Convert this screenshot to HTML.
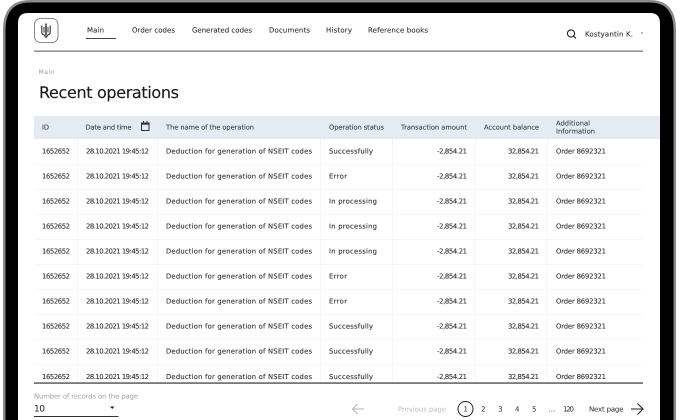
<!DOCTYPE html>
<html><head><meta charset="utf-8"><style>
html,body{margin:0;padding:0;background:#fff}
svg{display:block;font-family:"DejaVu Sans","Liberation Sans",sans-serif;text-rendering:geometricPrecision}
.r text{font-size:6.800px;fill:#2c2c2c;stroke:#2c2c2c;stroke-width:.1px}
.h text{font-size:6.700px;fill:#363c42;stroke:#363c42;stroke-width:.08px}
.n text{font-size:7px;fill:#2c2c2c;stroke:#2c2c2c;stroke-width:.08px}
</style></head><body>
<svg width="684" height="420" viewBox="0 0 684 420" xmlns="http://www.w3.org/2000/svg">
<rect width="684" height="420" fill="#fff"/>
<path d="M3 420V30Q3 0 30 0H650Q676 0 676 30V420Z" fill="#8a8a8a"/>
<path d="M5.500 420V30Q5.500 2.500 30 2.500H650Q673.500 2.500 673.500 30V420Z" fill="#000"/>
<path d="M18 420V23Q18 13 28 13H650Q660 13 660 23V420Z" fill="#fff"/>
<rect x="34.500" y="18.500" width="23.500" height="24" rx="6" fill="none" stroke="#666" stroke-width=".8"/>
<g fill="none" stroke="#222">
<path d="M46 23.500V35.500" stroke-width="1.400"/>
<path d="M41.800 25.500V32.500Q41.800 34.500 44 34.800L46 37.500L48 34.800Q50.200 34.500 50.200 32.500V25.500" stroke-width="1"/>
<path d="M44 27V32.500M48 27V32.500" stroke-width=".9"/>
</g>
<g class="n">
<text x="87" y="32.500" textLength="17">Main</text>
<text x="132" y="32.500" textLength="43">Order codes</text>
<text x="192" y="32.500" textLength="60">Generated codes</text>
<text x="269" y="32.500" textLength="41">Documents</text>
<text x="326" y="32.500" textLength="26">History</text>
<text x="368" y="32.500" textLength="60">Reference books</text>
<text x="585" y="36.500" textLength="48">Kostyantin K.</text>
</g>
<rect x="86" y="38" width="30" height="1" fill="#444"/>
<circle cx="571" cy="33.500" r="3.600" fill="none" stroke="#222" stroke-width="1.100"/>
<path d="M573.700 36.200l2.300 2.300" stroke="#222" stroke-width="1.100"/>
<path d="M641 32.500h2l-1 1.500z" fill="#444"/>
<rect x="34" y="50.500" width="609" height="1.300" fill="#7b7b7b"/>
<text x="38.500" y="74" font-size="6.200" fill="#a0a0a0" textLength="16">Main</text>
<text x="39" y="98" font-size="16" fill="#1c1c1c" stroke="#1c1c1c" stroke-width=".15" textLength="140">Recent operations</text>

<rect x="34" y="116" width="626" height="23" fill="#e4ebf2"/>
<g class="h">
<text x="42" y="129.500" textLength="7">ID</text>
<text x="85.500" y="129.500" textLength="46">Date and time</text>
<text x="166" y="129.500" textLength="88">The name of the operation</text>
<text x="329" y="129.500" textLength="55">Operation status</text>
<text x="401" y="129.500" textLength="66">Transaction amount</text>
<text x="484" y="129.500" textLength="55">Account balance</text>
<text x="556" y="125.500" textLength="34">Additional</text>
<text x="556" y="133.500" textLength="39">Information</text>
</g>
<rect x="141.500" y="123" width="7.500" height="7.500" fill="none" stroke="#333" stroke-width="1"/>
<rect x="141" y="122.500" width="8.500" height="2.200" fill="#333"/><rect x="143" y="121" width="1" height="2" fill="#333"/><rect x="146.500" y="121" width="1" height="2" fill="#333"/>

<g stroke="#f3f6fa" stroke-width="1">
<path d="M77.500 139V382M157.500 139V382M320.500 139V382M392.500 139V382M475.500 139V382M547.500 139V382"/>
<path d="M34 164.500H643M34 189.500H643M34 214.500H643M34 239.500H643M34 264.500H643M34 289.500H643M34 314.500H643M34 339.500H643M34 364.500H643"/>
</g>

<g class="r">
<text x="42" y="153.500" textLength="28">1652652</text><text x="86" y="153.500" textLength="63">28.10.2021 19:45:12</text><text x="166" y="153.500" textLength="146">Deduction for generation of NSEIT codes</text><text x="329" y="153.500" textLength="44">Successfully</text><text x="437" y="153.500" textLength="30">-2,854.21</text><text x="508" y="153.500" textLength="31">32,854.21</text><text x="556" y="153.500" textLength="50">Order 8692321</text>
<text x="42" y="178.500" textLength="28">1652652</text><text x="86" y="178.500" textLength="63">28.10.2021 19:45:12</text><text x="166" y="178.500" textLength="146">Deduction for generation of NSEIT codes</text><text x="329" y="178.500" textLength="18">Error</text><text x="437" y="178.500" textLength="30">-2,854.21</text><text x="508" y="178.500" textLength="31">32,854.21</text><text x="556" y="178.500" textLength="50">Order 8692321</text>
<text x="42" y="203.500" textLength="28">1652652</text><text x="86" y="203.500" textLength="63">28.10.2021 19:45:12</text><text x="166" y="203.500" textLength="146">Deduction for generation of NSEIT codes</text><text x="329" y="203.500" textLength="48">In processing</text><text x="437" y="203.500" textLength="30">-2,854.21</text><text x="508" y="203.500" textLength="31">32,854.21</text><text x="556" y="203.500" textLength="50">Order 8692321</text>
<text x="42" y="228.500" textLength="28">1652652</text><text x="86" y="228.500" textLength="63">28.10.2021 19:45:12</text><text x="166" y="228.500" textLength="146">Deduction for generation of NSEIT codes</text><text x="329" y="228.500" textLength="48">In processing</text><text x="437" y="228.500" textLength="30">-2,854.21</text><text x="508" y="228.500" textLength="31">32,854.21</text><text x="556" y="228.500" textLength="50">Order 8692321</text>
<text x="42" y="253.500" textLength="28">1652652</text><text x="86" y="253.500" textLength="63">28.10.2021 19:45:12</text><text x="166" y="253.500" textLength="146">Deduction for generation of NSEIT codes</text><text x="329" y="253.500" textLength="48">In processing</text><text x="437" y="253.500" textLength="30">-2,854.21</text><text x="508" y="253.500" textLength="31">32,854.21</text><text x="556" y="253.500" textLength="50">Order 8692321</text>
<text x="42" y="278.500" textLength="28">1652652</text><text x="86" y="278.500" textLength="63">28.10.2021 19:45:12</text><text x="166" y="278.500" textLength="146">Deduction for generation of NSEIT codes</text><text x="329" y="278.500" textLength="18">Error</text><text x="437" y="278.500" textLength="30">-2,854.21</text><text x="508" y="278.500" textLength="31">32,854.21</text><text x="556" y="278.500" textLength="50">Order 8692321</text>
<text x="42" y="303.500" textLength="28">1652652</text><text x="86" y="303.500" textLength="63">28.10.2021 19:45:12</text><text x="166" y="303.500" textLength="146">Deduction for generation of NSEIT codes</text><text x="329" y="303.500" textLength="18">Error</text><text x="437" y="303.500" textLength="30">-2,854.21</text><text x="508" y="303.500" textLength="31">32,854.21</text><text x="556" y="303.500" textLength="50">Order 8692321</text>
<text x="42" y="328.500" textLength="28">1652652</text><text x="86" y="328.500" textLength="63">28.10.2021 19:45:12</text><text x="166" y="328.500" textLength="146">Deduction for generation of NSEIT codes</text><text x="329" y="328.500" textLength="44">Successfully</text><text x="437" y="328.500" textLength="30">-2,854.21</text><text x="508" y="328.500" textLength="31">32,854.21</text><text x="556" y="328.500" textLength="50">Order 8692321</text>
<text x="42" y="353.500" textLength="28">1652652</text><text x="86" y="353.500" textLength="63">28.10.2021 19:45:12</text><text x="166" y="353.500" textLength="146">Deduction for generation of NSEIT codes</text><text x="329" y="353.500" textLength="44">Successfully</text><text x="437" y="353.500" textLength="30">-2,854.21</text><text x="508" y="353.500" textLength="31">32,854.21</text><text x="556" y="353.500" textLength="50">Order 8692321</text>
<text x="42" y="379" textLength="28">1652652</text><text x="86" y="379" textLength="63">28.10.2021 19:45:12</text><text x="166" y="379" textLength="146">Deduction for generation of NSEIT codes</text><text x="329" y="379" textLength="44">Successfully</text><text x="437" y="379" textLength="30">-2,854.21</text><text x="508" y="379" textLength="31">32,854.21</text><text x="556" y="379" textLength="50">Order 8692321</text>
</g>
<rect x="34" y="382.500" width="609" height="1.100" fill="#222"/>

<text x="34" y="398.500" font-size="6.800" fill="#a0a0a0" textLength="104">Number of records on the page</text>
<text x="34" y="411.500" font-size="9" fill="#222" textLength="11">10</text>
<path d="M110 406.500h4.500l-2.250 2.500z" fill="#222"/>
<rect x="34" y="416" width="84.500" height="1" fill="#333"/>

<path d="M364 409H352.500M357.500 404l-5 5 5 5" fill="none" stroke="#b5b5b5" stroke-width="1"/>
<text x="398" y="411.500" font-size="6.800" fill="#bcbcbc" textLength="48">Previous page</text>
<circle cx="465.500" cy="409" r="7.500" fill="none" stroke="#222" stroke-width="1"/>
<g font-size="7" fill="#2c2c2c">
<text x="463.500" y="411.500">1</text>
<text x="481" y="411.500">2</text>
<text x="498" y="411.500">3</text>
<text x="515" y="411.500">4</text>
<text x="532" y="411.500">5</text>
<text x="548.500" y="411.500">...</text>
<text x="563" y="411.500" textLength="11">120</text>
<text x="589" y="411.500" textLength="34.500">Next page</text>
</g>
<path d="M631 409H642.500M637.500 403.500l5.500 5.500-5.500 5.500" fill="none" stroke="#222" stroke-width="1.100"/>
</svg>
</body></html>
